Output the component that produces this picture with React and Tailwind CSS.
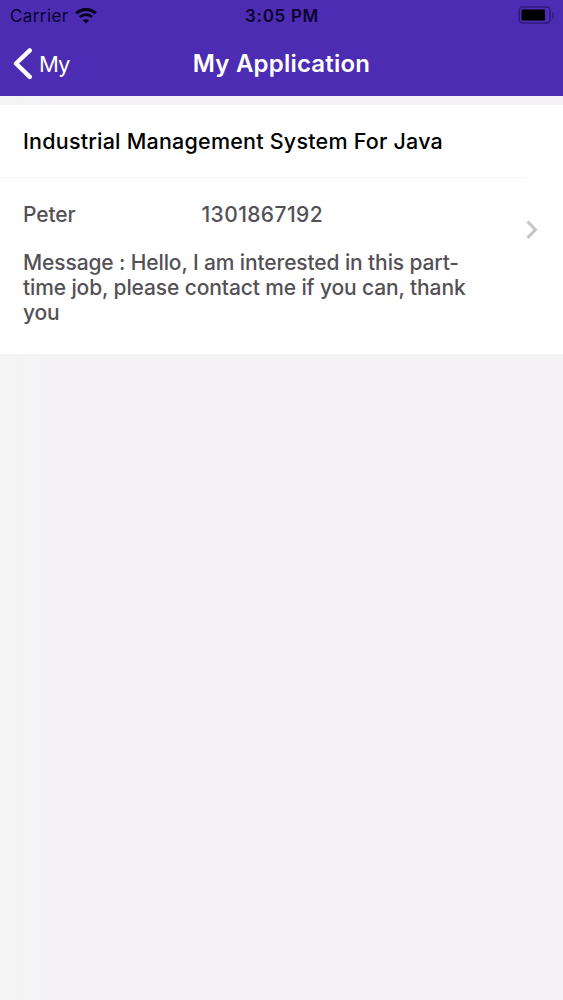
const application = {
  title: "Industrial Management System For Java",
  name: "Peter",
  contact: "1301867192",
  message: [
    "Message : Hello, I am interested in this part-",
    "time job, please contact me if you can, thank",
    "you",
  ],
};

function StatusBar() {
  return (
    <div className="grid h-8 grid-cols-3 items-center pr-[9px] pl-2.5 text-[#0b0230]">
      <div className="flex items-center gap-1.5">
        <span className="text-[17px] leading-8 tracking-[0.4px]">Carrier</span>
        <svg className="h-4 w-[22px]" viewBox="0 0 22 16" fill="none" stroke="#080118">
          <path d="M1.2 5.4C6.8 0 15.2 0 20.8 5.4" strokeWidth="3.1" />
          <path d="M4.9 9.1c3.5-3.3 8.7-3.3 12.2 0" strokeWidth="2.7" />
          <path d="M11 15.6 7.9 12.4c1.8-1.6 4.4-1.6 6.2 0z" fill="#080118" stroke="none" />
        </svg>
      </div>
      <span className="text-center text-[17px] leading-8 font-semibold tracking-[0.7px]">3:05 PM</span>
      <svg className="mt-[-2px] h-[18px] w-9 justify-self-end" viewBox="0 0 36 18" fill="none">
        <rect x="1.2" y="1" width="31" height="16" rx="3.5" stroke="#30197f" strokeWidth="1.5" />
        <rect x="3.5" y="3.5" width="23.5" height="11" rx="1" fill="#000" />
        <path d="M35 6.5v6" stroke="#30197f" strokeWidth="1.5" />
      </svg>
    </div>
  );
}

function NavBar() {
  return (
    <div className="grid h-16 grid-cols-[1fr_auto_1fr] items-center text-white">
      <div className="flex items-center gap-[5px] pl-[13px]">
        <svg className="h-8 w-5" viewBox="0 0 20 32" fill="none" stroke="#fff" strokeWidth="4.4" strokeLinecap="round" strokeLinejoin="round">
          <path d="M16.8 2.4 3 15.5l13.8 13.4" />
        </svg>
        <span className="pl-px text-[22px] leading-8 tracking-[-1px]">My</span>
      </div>
      <h1 className="text-[24px] leading-8 font-semibold tracking-[0.2px]">My Application</h1>
    </div>
  );
}

function ApplicationCard({ item }) {
  return (
    <div className="flex h-[249px] items-center bg-white">
      <div className="h-full w-[524px]">
        <h2 className="flex h-[73px] items-center border-b border-[#f5f5f5] pl-[23px] text-[21.5px] font-medium tracking-[0.22px] text-black">
          {item.title}
        </h2>
        <div className="pt-6 pl-[23px] text-[21px] leading-[25px] font-medium text-[#545156]">
          <div className="flex">
            <span className="w-[178.5px] tracking-[-0.1px]">{item.name}</span>
            <span className="tracking-[0.4px]">{item.contact}</span>
          </div>
          <p className="mt-[22.5px] whitespace-nowrap tracking-[-0.12px]">
            {item.message.map((line) => (
              <span key={line} className="block">{line}</span>
            ))}
          </p>
        </div>
      </div>
      <svg className="ml-0.5 h-5 w-3" viewBox="0 0 12 20" fill="none" stroke="#c5c5c7" strokeWidth="3">
        <path d="m1.5 1.5 8 8.2-8 8.2" />
      </svg>
    </div>
  );
}

export default function App() {
  return (
    <div className="min-h-screen bg-linear-to-r from-[#f5f5f5] to-[#f5f3f6] to-10% font-['Inter',sans-serif]">
      <header className="bg-[#4c2cb2]">
        <StatusBar />
        <NavBar />
      </header>
      <main className="pt-[9px]">
        <ApplicationCard item={application} />
      </main>
    </div>
  );
}
